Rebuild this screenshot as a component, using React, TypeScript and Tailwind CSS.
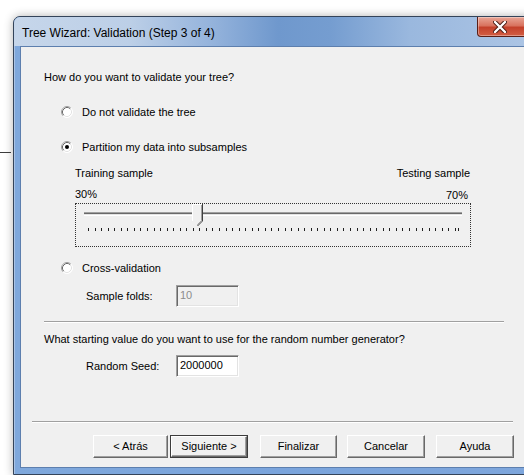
import React from "react";

function RadioDot({ checked }: { checked?: boolean }) {
  return (
    <svg width="12" height="12" viewBox="0 0 12 12" className="shrink-0">
      <circle cx="6" cy="6" r="5.5" fill="#ffffff" />
      <path d="M2.11 9.89 A5.5 5.5 0 0 1 9.89 2.11" fill="none" stroke="#a0a0a0" />
      <path d="M9.89 2.11 A5.5 5.5 0 0 1 2.11 9.89" fill="none" stroke="#ffffff" />
      <path d="M2.82 9.18 A4.5 4.5 0 0 1 9.18 2.82" fill="none" stroke="#696969" />
      <path d="M9.18 2.82 A4.5 4.5 0 0 1 2.82 9.18" fill="none" stroke="#e3e3e3" />
      {checked && <circle cx="6" cy="6" r="2" fill="#000000" />}
    </svg>
  );
}

function Radio({ label, checked, className }: { label: string; checked?: boolean; className: string }) {
  return (
    <div className={`flex h-[18px] items-center gap-[9px] ml-[17px] ${className}`}>
      <RadioDot checked={checked} />
      <span>{label}</span>
    </div>
  );
}

function Field({ value, disabled }: { value: string; disabled?: boolean }) {
  return (
    <div
      className={`w-[63px] h-[22px] border border-t-[#a0a0a0] border-l-[#a0a0a0] border-r-white border-b-white shadow-[inset_1px_1px_0_#696969,inset_-1px_-1px_0_#e3e3e3] pl-[3px] pt-[2px] leading-[14px] ${
        disabled ? "bg-[#f0f0f0] text-[#8c8c8c]" : "bg-white text-black"
      }`}
    >
      {value}
    </div>
  );
}

function Etched({ className }: { className: string }) {
  return <div className={`h-[2px] border-t border-t-[#a0a0a0] border-b border-b-white ${className}`} />;
}

function Btn({ label, w, primary }: { label: string; w: string; primary?: boolean }) {
  const face = (
    <div className="flex h-full items-center justify-center border border-t-white border-l-white border-r-[#696969] border-b-[#696969] bg-[#f0f0f0] shadow-[inset_-1px_-1px_0_#a0a0a0]">
      {label}
    </div>
  );
  return (
    <div className={`${w} h-[23px] shrink-0 ${primary ? "border border-[#3c3c3c]" : ""}`}>{face}</div>
  );
}

// trackbar drawing: channel, ticks and the pointer thumb
function Trackbar() {
  const ticks: number[] = [];
  for (let k = 0; k <= 56; k++) ticks.push(12 + k * 6.55);
  ticks.push(382);
  return (
    <div className="mt-px h-[44px] w-[396px] border border-dotted border-[#333]">
      <svg width="394" height="42" viewBox="0 0 394 42" className="block">
        <rect x="8" y="8" width="378" height="1" fill="#a0a0a0" />
        <rect x="8" y="9" width="378" height="1" fill="#696969" />
        <rect x="8" y="10" width="378" height="1" fill="#e3e3e3" />
        <rect x="8" y="11" width="378" height="1" fill="#ffffff" />
        {ticks.map((x, i) => (
          <rect key={i} x={Math.round(x)} y="24" width="1" height="3" fill="#202020" />
        ))}
        <polygon points="116,0.5 126.5,0.5 126.5,17 121.5,22 116,17" fill="#f0f0f0" />
        <path d="M116.5 17 L116.5 0.5 L126 0.5" fill="none" stroke="#ffffff" />
        <path d="M126.5 0 L126.5 17 L121.5 22" fill="none" stroke="#404040" />
        <path d="M125.5 1 L125.5 16.6 L121.3 20.8" fill="none" stroke="#a0a0a0" />
      </svg>
    </div>
  );
}

function CloseGlyph() {
  return (
    <svg width="14" height="12" viewBox="0 0 14 12">
      <path d="M2 1 L12 11 M12 1 L2 11" stroke="#4a1c14" strokeWidth="4.2" strokeLinecap="round" />
      <path d="M2 1 L12 11 M12 1 L2 11" stroke="#ffffff" strokeWidth="2.4" strokeLinecap="round" />
    </svg>
  );
}

export default function App() {
  return (
    <div className="relative h-[475px] w-[524px] overflow-hidden bg-white font-['Liberation_Sans',Arial,sans-serif] text-[11px] text-black">
      <div className="absolute left-0 top-[152px] h-px w-[11px] bg-[#3c3c3c]" />
      <div className="pl-[13px] pt-[16px]">
        <div className="flex h-[459px] w-[530px] flex-col overflow-hidden rounded-t-[7px] border border-[#34445a] bg-[#6f9edb] shadow-[0_0_10px_rgba(0,0,0,0.3)]">
          {/* title bar */}
          <div className="relative flex h-[29px] shrink-0 items-center bg-[linear-gradient(90deg,#c6d6ea_0%,#bccfe7_22%,#93b2db_38%,#6f98cd_50%,#759dd0_60%,#9ab8de_75%,#aec6e5_100%)] pl-[8px] pt-[3px] text-[12px]">
            <span>Tree Wizard: Validation (Step 3 of 4)</span>
            <div className="absolute left-[463px] top-0 flex h-[20px] w-[52px] items-center justify-center rounded-b-[4px] border border-t-0 border-[#5a1e16] bg-[linear-gradient(180deg,#e9a696_0%,#d9735f_45%,#c4412b_55%,#d25e44_100%)] pr-[6px] shadow-[inset_0_0_0_1px_rgba(255,255,255,0.35)]">
              <CloseGlyph />
            </div>
          </div>

          {/* frame around the client area */}
          <div className="flex flex-1 flex-col bg-[linear-gradient(90deg,#7fa8dc_0%,#7aa4dc_50%,#7ea6dc_100%)] px-[6px] pb-[6px] shadow-[inset_1px_0_0_#a9c3e6]">
            <div className="flex flex-1 flex-col border border-[#5d7fae] bg-[#f0f0f0] pl-[23px]">
              <div className="mt-[21px] flex h-[18px] items-center">How do you want to validate your tree?</div>
              <Radio className="mt-[17px]" label="Do not validate the tree" />
              <Radio className="mt-[17px]" checked label="Partition my data into subsamples" />

              <div className="ml-[31px] w-[396px]">
                <div className="mt-[9px] flex h-[16px] items-center justify-between pr-px">
                  <span>Training sample</span>
                  <span>Testing sample</span>
                </div>
                <div className="mt-[5px] flex h-[16px] items-center justify-between pr-[3px]">
                  <span>30%</span>
                  <span className="pt-[3px]">70%</span>
                </div>
                <Trackbar />
              </div>

              <Radio className="mt-[12px]" label="Cross-validation" />
              <div className="mt-[8px] ml-[42px] flex h-[22px] items-center">
                <span className="w-[90px]">Sample folds:</span>
                <Field value="10" disabled />
              </div>

              <Etched className="mt-[14px] w-[460px]" />
              <div className="mt-[8px] flex h-[16px] items-center">
                What starting value do you want to use for the random number generator?
              </div>
              <div className="mt-[8px] ml-[42px] flex h-[22px] items-center">
                <span className="w-[90px]">Random Seed:</span>
                <Field value="2000000" />
              </div>

              <Etched className="mt-[44px] -ml-[12px] w-[481px]" />
              <div className="mt-[12px] ml-[49px] flex h-[23px] items-center">
                <Btn w="w-[75px]" label="< Atrás" />
                <div className="ml-[2px]">
                  <Btn w="w-[78px]" label="Siguiente >" primary />
                </div>
                <div className="ml-[12px]">
                  <Btn w="w-[77px]" label="Finalizar" />
                </div>
                <div className="ml-[10px]">
                  <Btn w="w-[78px]" label="Cancelar" />
                </div>
                <div className="ml-[11px]">
                  <Btn w="w-[78px]" label="Ayuda" />
                </div>
              </div>
            </div>
          </div>
        </div>
      </div>
    </div>
  );
}
